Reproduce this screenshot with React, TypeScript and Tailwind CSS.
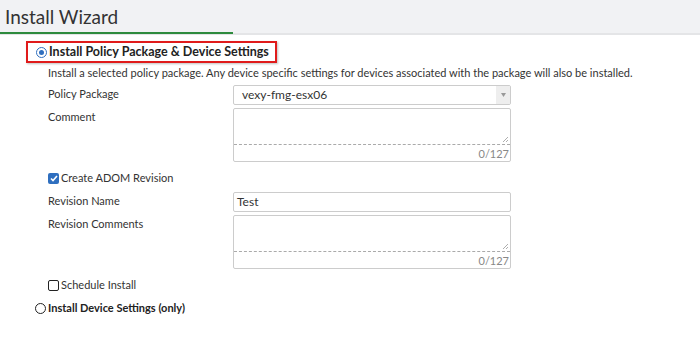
import React from "react";

// Install Wizard step: policy package install options
function Radio({ checked }: { checked?: boolean }) {
  return (
    <span
      className={`w-[11px] h-[11px] rounded-full border grid place-items-center shrink-0 ${
        checked ? "border-[#2f6fbf]" : "border-[#222]"
      }`}
    >
      {checked && <span className="w-[5px] h-[5px] rounded-full bg-[#2f6fbf]" />}
    </span>
  );
}

function Counter() {
  return (
    <div className="border border-[#ccc] rounded-[2px] w-[278px] h-[54px] flex flex-col bg-white">
      <div className="flex-1 relative">
        <svg className="absolute right-[1px] bottom-[1px]" width="7" height="7" viewBox="0 0 7 7">
          <path d="M6 1L1 6M6 4L4 6" stroke="#999" strokeWidth="0.8" />
        </svg>
      </div>
      <div className="border-t border-dashed border-[#aaa] h-[17px] text-right text-[11px] leading-[17px] text-[#888] pr-[1px]">
        0/127
      </div>
    </div>
  );
}

export default function App() {
  return (
    <div
      className="w-[700px] h-[341px] bg-white text-[#333] overflow-hidden"
      style={{ fontFamily: "Lato, 'Open Sans', sans-serif" }}
    >
      <header className="h-[35px] bg-[#f1f2f4] border-b-2 border-[#e4e5e7] relative">
        <div className="pl-[5px] pt-[5px] text-[19px] leading-[24px] text-[#333]">Install Wizard</div>
        <div className="absolute left-0 bottom-[-1px] w-[233px] h-[2px] bg-[#2e8b3d]" />
      </header>

      <div className="pl-[26px] pt-[6px]">
        <div className="flex w-fit items-center gap-[2px] border-2 border-[#e01b1b] h-[22px] pl-[8px] pr-[6px] shadow-[1px_1px_2px_rgba(0,0,0,0.25)]">
          <Radio checked />
          <span className="text-[12.5px] leading-[14px] font-bold text-[#222]">
            Install Policy Package &amp; Device Settings
          </span>
        </div>
      </div>

      <div className="pl-[48px] text-[11px]">
        <div className="mt-[3px] leading-[14px]">
          Install a selected policy package. Any device specific settings for devices associated with the package will
          also be installed.
        </div>

        <div className="grid grid-cols-[185px_278px] gap-y-[3px] mt-[5px]">
          <div className="leading-[14px] pt-[2px]">Policy Package</div>
          <div className="h-[20px] border border-[#ccc] rounded-[2px] flex">
            <div className="flex-1 pl-[8px] leading-[18px] text-[12px] text-[#333]">vexy-fmg-esx06</div>
            <div className="w-[14px] bg-[#eee] grid place-items-center">
              <svg width="5" height="4" viewBox="0 0 5 4">
                <path d="M0 0h5L2.5 4z" fill="#999" />
              </svg>
            </div>
          </div>

          <div className="leading-[14px] pt-[2px]">Comment</div>
          <Counter />
        </div>

        <div className="flex items-center gap-[2px] mt-[9px] h-[14px]">
          <span className="w-[11px] h-[11px] rounded-[2px] bg-[#2f6fbf] grid place-items-center">
            <svg width="8" height="7" viewBox="0 0 8 7">
              <path d="M1 3.5L3 5.5L7 1" stroke="white" strokeWidth="1.6" fill="none" />
            </svg>
          </span>
          <span>Create ADOM Revision</span>
        </div>

        <div className="grid grid-cols-[185px_278px] gap-y-[3px] mt-[7px]">
          <div className="leading-[14px] pt-[2px]">Revision Name</div>
          <div className="h-[20px] border border-[#ccc] rounded-[2px] pl-[3px] leading-[18px] text-[12px]">Test</div>

          <div className="leading-[14px] pt-[2px]">Revision Comments</div>
          <Counter />
        </div>

        <div className="flex items-center gap-[2px] mt-[9px] h-[14px]">
          <span className="w-[11px] h-[11px] rounded-[2px] border-[1.5px] border-[#222]" />
          <span>Schedule Install</span>
        </div>
      </div>

      <div className="pl-[35px] flex items-center gap-[2px] mt-[9px] h-[14px]">
        <Radio />
        <span className="text-[11px] font-bold text-[#222]">Install Device Settings (only)</span>
      </div>
    </div>
  );
}
